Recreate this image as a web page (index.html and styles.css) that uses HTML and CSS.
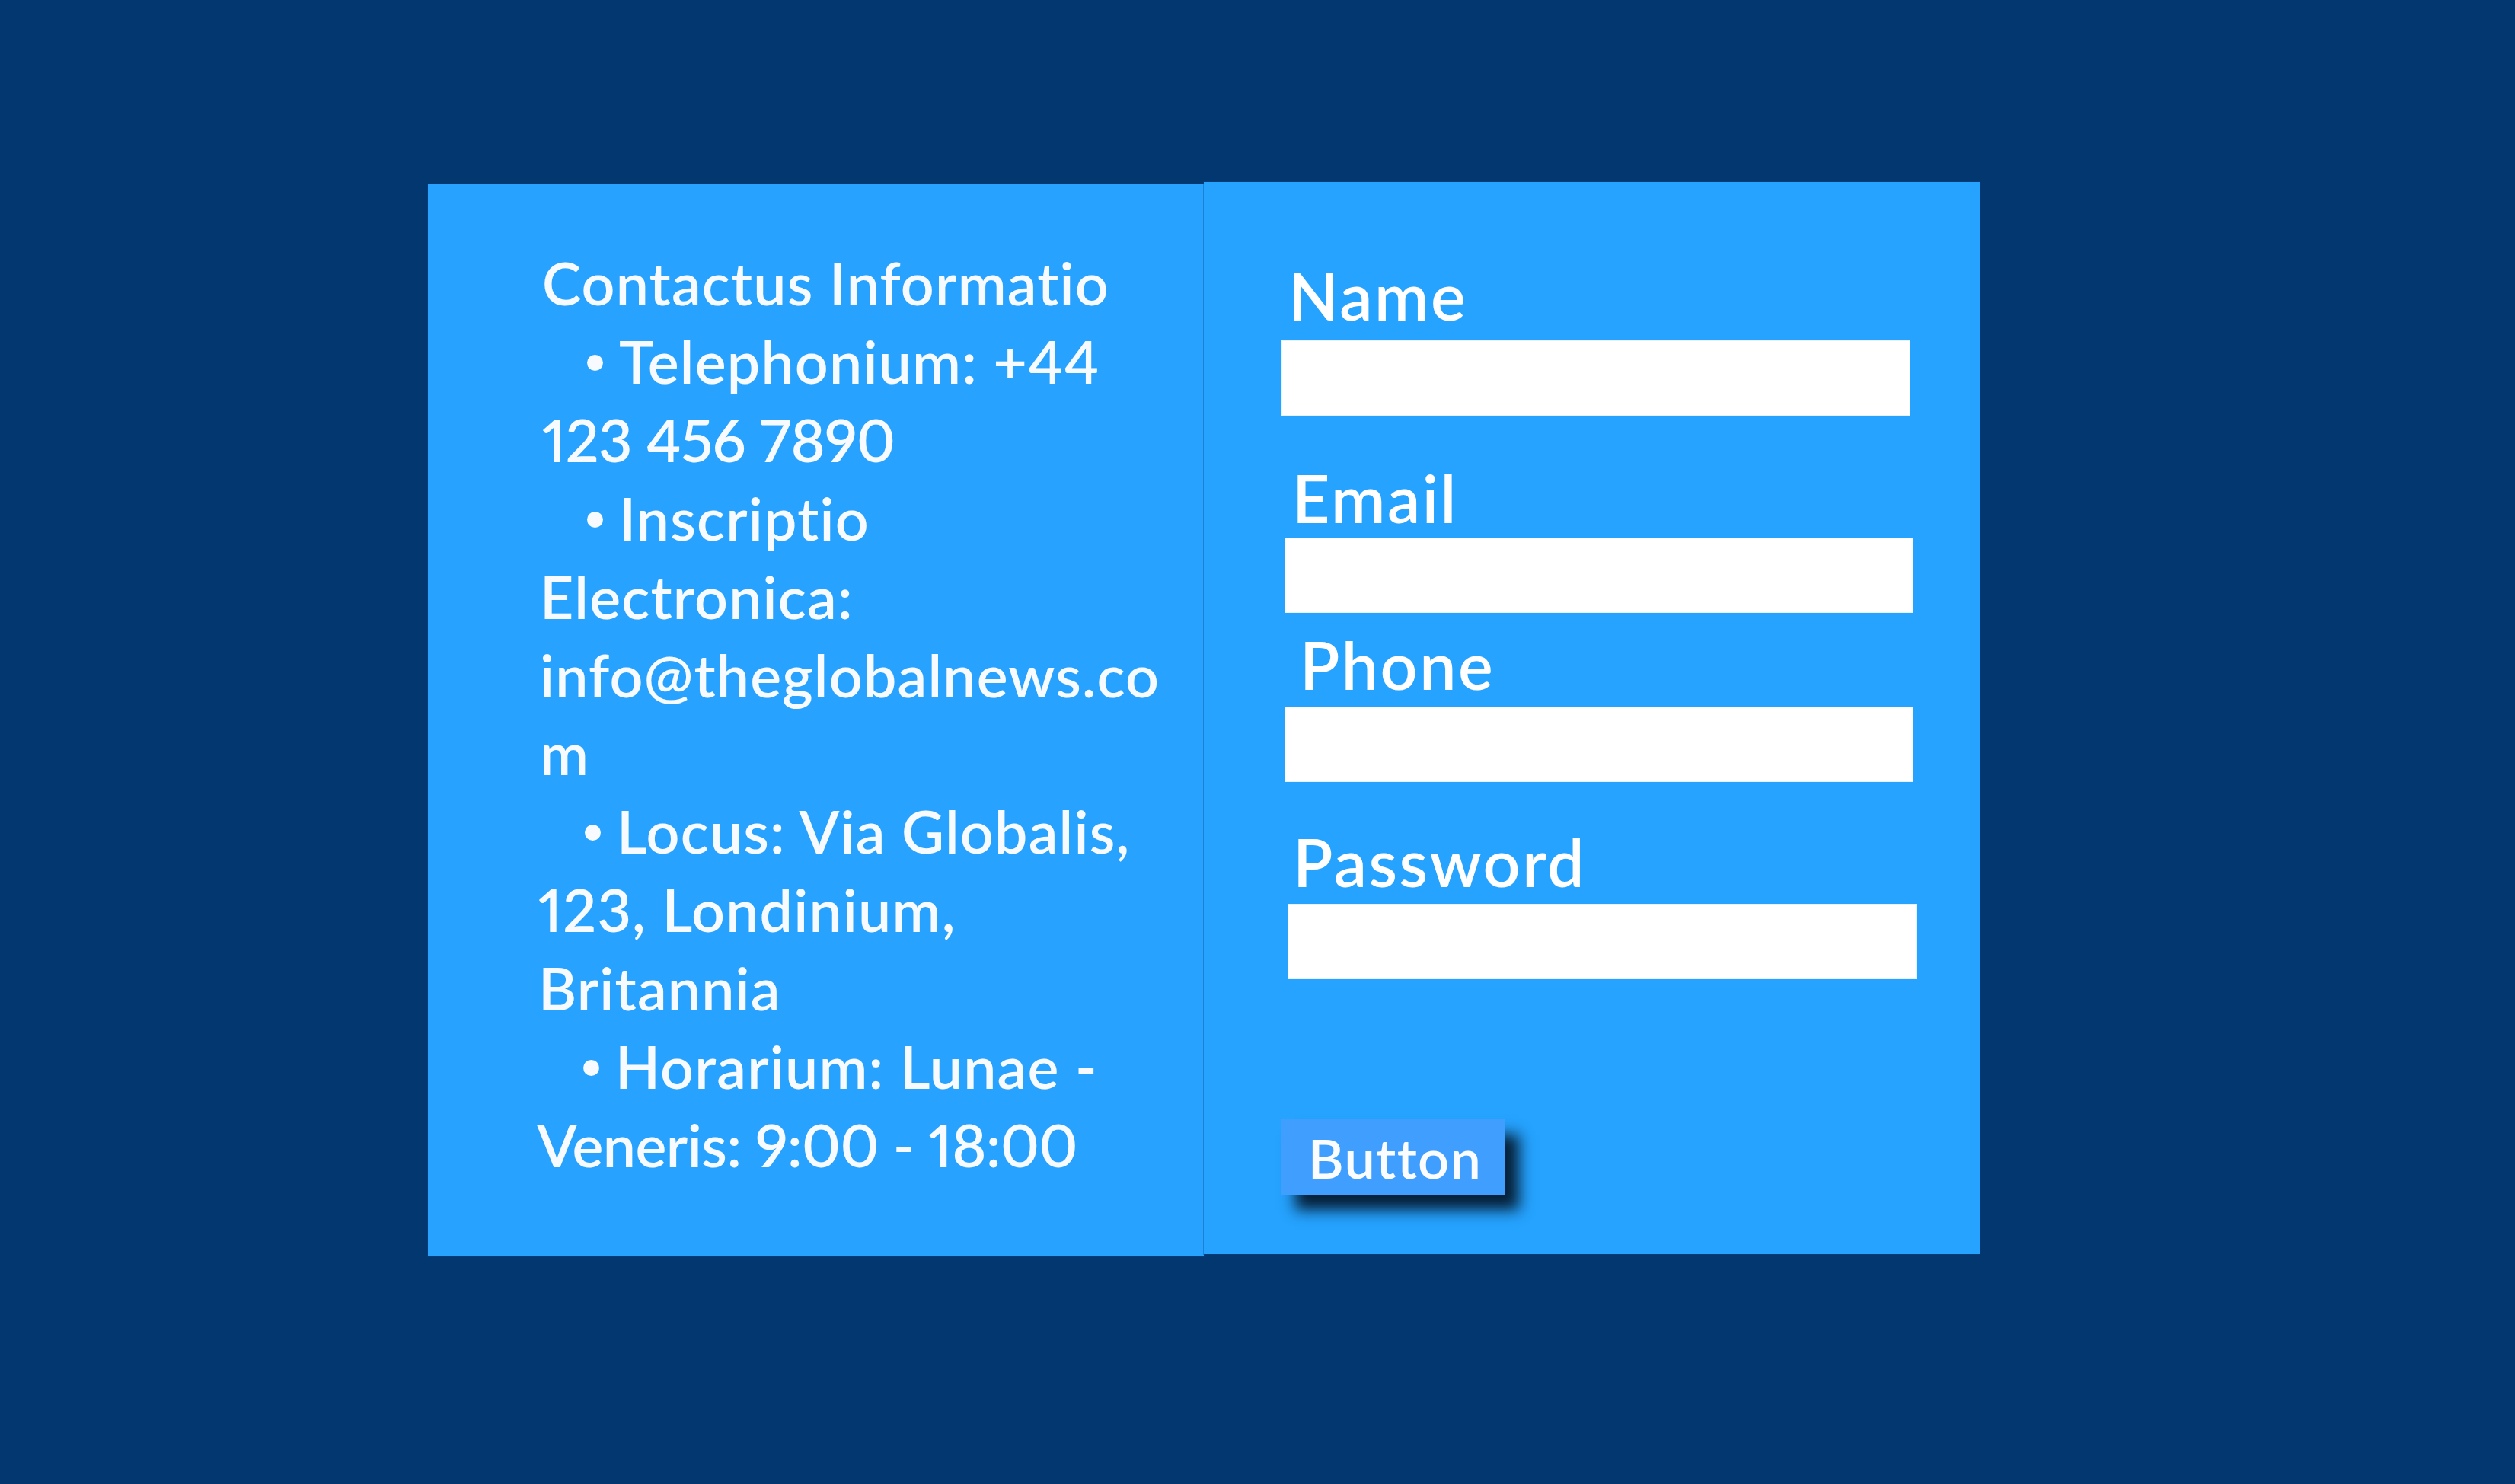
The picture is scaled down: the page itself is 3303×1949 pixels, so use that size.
FILE: index.html
```html
<!DOCTYPE html>
<html lang="en">
<head>
<meta charset="utf-8">
<title>Contact</title>
<link rel="stylesheet" href="styles.css">
</head>
<body>
<main class="stage">
  <section class="panel panel-info">
    <div class="info">
      <div class="line">Contactus Informatio</div>
      <div class="line item"><span class="bullet"></span>Telephonium: +44</div>
      <div class="line nums">123 456 7890</div>
      <div class="line item"><span class="bullet"></span>Inscriptio</div>
      <div class="line shift-1">Electronica:</div>
      <div class="line shift-1">info@theglobalnews.co</div>
      <div class="line shift-1">m</div>
      <div class="line item shift-1"><span class="bullet"></span>Locus: Via Globalis,</div>
      <div class="line shift-2">123, Londinium,</div>
      <div class="line shift-2">Britannia</div>
      <div class="line item shift-2"><span class="bullet"></span>Horarium: Lunae -</div>
      <div class="line nums shift-3">Veneris: 9:00 - 18:00</div>
    </div>
  </section>
  <section class="panel panel-form">
    <form class="form">
      <div class="field field-name">
        <label class="label" for="name">Name</label>
        <input class="input" id="name" type="text">
      </div>
      <div class="field field-email">
        <label class="label" for="email">Email</label>
        <input class="input" id="email" type="email">
      </div>
      <div class="field field-phone">
        <label class="label" for="phone">Phone</label>
        <input class="input" id="phone" type="tel">
      </div>
      <div class="field field-password">
        <label class="label" for="password">Password</label>
        <input class="input" id="password" type="password">
      </div>
      <button class="button" type="button">Button</button>
    </form>
  </section>
</main>
</body>
</html>
```
FILE: styles.css
```css
* { box-sizing: border-box; }

html, body {
  margin: 0;
  padding: 0;
}

body {
  width: 3303px;
  height: 1949px;
  background: #03376f;
  font-family: "Lato", "Liberation Sans", sans-serif;
  font-variant-ligatures: none;
  font-variant-numeric: proportional-nums;
  color: #f7fbff;
  overflow: hidden;
}

.stage {
  display: flex;
  align-items: flex-start;
  padding: 239px 0 0 562px;
}

.panel {
  width: 1019px;
  height: 1408px;
  background: #27a2ff;
  box-shadow: 0 0 0 1px rgba(10, 70, 140, 0.35);
}

.panel-info {
  margin-top: 3px;
  padding: 78px 0 0 150px;
}

.info {
  font-size: 77px;
  font-weight: 600;
  line-height: 102.9px;
  letter-spacing: 1.2px;
}

.line {
  white-space: nowrap;
}

.nums {
  letter-spacing: -0.5px;
}

.shift-1 { margin-left: -3px; }
.shift-2 { margin-left: -5px; }
.shift-3 { margin-left: -7px; }

.bullet {
  display: inline-block;
  width: 21px;
  height: 21px;
  margin: 0 21px 17px 59px;
  border-radius: 50%;
  background: #f7fbff;
}

.panel-form {
  background: #25a3ff;
  padding: 107px 0 0 102px;
}

.form {
  display: flex;
  flex-direction: column;
  align-items: flex-start;
}

.field {
  display: flex;
  flex-direction: column;
  align-items: flex-start;
}

.label {
  display: block;
  font-size: 86px;
  font-weight: 600;
  line-height: 83px;
  letter-spacing: 2.5px;
  color: #ffffff;
}

.input {
  display: block;
  width: 826px;
  height: 99px;
  margin: 0;
  padding: 0;
  border: 1px solid #e6f3ff;
  background: #ffffff;
  outline: none;
}

.field-name .label { margin-left: 9px; }
.field-name .input { margin-top: 18px; }

.field-email { margin: 66px 0 0 4px; }
.field-email .label { margin-left: 10px; }
.field-email .input { margin-top: 11px; }

.field-phone { margin: 26px 0 0 4px; }
.field-phone .label { margin-left: 20px; }
.field-phone .input { margin-top: 14px; }

.field-password { margin: 63px 0 0 8px; }
.field-password .label { margin-left: 7px; }
.field-password .input { margin-top: 14px; }

.button {
  margin-top: 184px;
  width: 294px;
  height: 99px;
  display: flex;
  align-items: center;
  justify-content: center;
  padding: 0 0 0 4px;
  border: none;
  background: #409ffe;
  color: #fafcff;
  font-family: "Lato", "Liberation Sans", sans-serif;
  font-variant-ligatures: none;
  font-size: 72px;
  font-weight: 600;
  letter-spacing: 1.3px;
  line-height: 1;
  box-shadow: 18px 20px 18px rgba(0, 8, 20, 0.85);
}
```
